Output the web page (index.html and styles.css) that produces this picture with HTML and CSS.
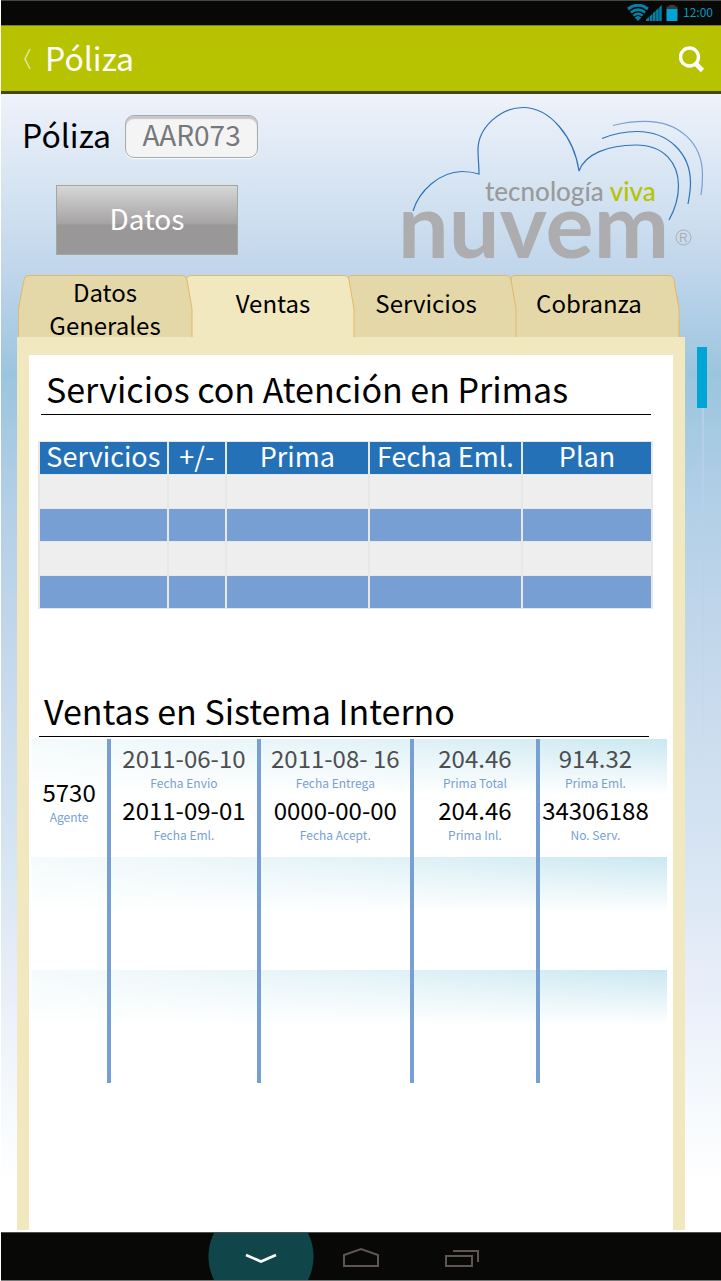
FILE: index.html
```html
<!DOCTYPE html>
<html lang="es">
<head>
<meta charset="utf-8">
<meta name="viewport" content="width=device-width, initial-scale=1">
<title>Póliza</title>
<link rel="stylesheet" href="styles.css">
</head>
<body>
<div class="status-bar">
  <svg class="status-icons" width="52" height="18" viewBox="0 0 52 18" aria-hidden="true">
    <g fill="none" stroke="#0481a8">
      <path d="M1 5Q11-2.500 21 5" stroke-width="3"/>
      <path d="M3.800 8.600Q11 2.800 18.200 8.600" stroke-width="2.600"/>
      <path d="M6.300 11.700Q11 7.700 15.700 11.700" stroke-width="2.400"/>
    </g>
    <path d="M7.700 13.500Q11 10.500 14.300 13.500L11 17Z" fill="#0481a8"/>
    <path d="M19 17V15.500L22 13V17ZM22.600 17V12.500L25.500 9.800V17ZM26 17V9L28.600 6.800V17ZM29.100 17V6.300L31.700 4V17ZM32.200 17V3.500L34.700 1V17Z" fill="#0481a8"/>
    <path d="M42 1H48V2.500H50.500V5H39.500V2.500H42Z" fill="#3c3c3c"/>
    <path d="M39.500 5H50.500V17H39.500Z" fill="#00a4d5"/>
  </svg>
  <span class="clock">12:00</span>
</div>
<header class="app-bar">
  <button class="back" type="button" aria-label="Atrás">
    <svg width="10" height="22" viewBox="0 0 10 22" aria-hidden="true"><path d="M8 1L3 11L8 21" fill="none" stroke="#dfe59b" stroke-width="1.600"/></svg>
  </button>
  <h1 class="app-title">Póliza</h1>
  <button class="search" type="button" aria-label="Buscar">
    <svg width="28" height="28" viewBox="0 0 28 28" aria-hidden="true"><circle cx="10.500" cy="12" r="9" fill="none" stroke="#fff" stroke-width="3.400"/><path d="M16 18L23.500 25.500" stroke="#fff" stroke-width="4.600"/></svg>
  </button>
</header>
<main class="page">
  <section class="hero">
    <div class="policy">
      <div class="policy-row">
        <label class="policy-label" for="policy">Póliza</label>
        <input class="policy-input" id="policy" type="text" value="AAR073">
      </div>
      <button class="data-button" type="button">Datos</button>
    </div>
    <svg class="logo" width="314" height="164" viewBox="396 100 314 164" role="img" aria-label="nuvem, tecnología viva">
      <g fill="none" stroke="#2d73b9" stroke-width="1.200">
        <path d="M413 211C419 191 439 172 462 171.500C468 171.500 474 172.500 479 174C479 166 478 158 478 150C478 127 501 107.500 523 107.500C550 107.500 574 137 579 171C585 154 608 145 636 145C664 145 678.500 163 678.500 186C678.500 201 674 211 669 220"/>
        <path d="M602 138.500C613 134 624 131.500 637 131.500C668 131.500 690.500 153 690.500 183C690.500 191 689 198 688 204"/>
        <path d="M613 125.500C622 123 633 121.300 645 121.300C679 121.300 702.500 143 702.500 175C702.500 183 702 189 701 195" stroke="#7c9fd3"/>
      </g>
      <text class="logo-tag" x="485" y="201">tecnología <tspan class="logo-accent">viva</tspan></text>
      <text class="logo-name" x="398" y="258">nuvem</text>
      <circle cx="683.500" cy="237.500" r="7.500" fill="none" stroke="#adadb0"/>
      <text class="logo-mark" x="679" y="242">R</text>
    </svg>
  </section>
  <div class="body-row">
    <div class="folder">
      <nav class="tabs" aria-label="Secciones">
        <svg class="tab-shapes" viewBox="0 0 662 62" preserveAspectRatio="none" aria-hidden="true">
          <g stroke="#e6b766" fill="#e4d8a8">
            <path d="M493 66V5Q493 .500 497 .500H651Q655 .500 656 5L661 34V66"/>
            <path d="M330 66V5Q330 .500 334 .500H488Q492 .500 493 5L498 34V66"/>
            <path d="M168 66V5Q169 .500 173 .500H326Q330 .500 331 5L336 34V66" fill="#f1e8c0"/>
            <path d="M.500 66V34L6 5Q7 .500 11 .500H165Q168 .500 169 5L174 34V66"/>
          </g>
        </svg>
        <button class="tab tab-wrapped" type="button">Datos<br>Generales</button>
        <button class="tab" type="button">Ventas</button>
        <button class="tab tab-inset" type="button">Servicios</button>
        <button class="tab tab-inset" type="button">Cobranza</button>
      </nav>
      <div class="sheet">
        <h2 class="heading">Servicios con Atención en Primas</h2>
        <table class="services">
          <colgroup><col class="w-service"><col class="w-sign"><col class="w-prima"><col class="w-date"><col class="w-plan"></colgroup>
          <thead><tr><th>Servicios</th><th>+/-</th><th>Prima</th><th>Fecha Eml.</th><th>Plan</th></tr></thead>
          <tbody>
            <tr><td></td><td></td><td></td><td></td><td></td></tr>
            <tr><td></td><td></td><td></td><td></td><td></td></tr>
            <tr><td></td><td></td><td></td><td></td><td></td></tr>
            <tr><td></td><td></td><td></td><td></td><td></td></tr>
          </tbody>
        </table>
        <h2 class="heading heading-sales">Ventas en Sistema Interno</h2>
        <table class="sales">
          <colgroup><col class="s-agent"><col class="s-sent"><col class="s-delivery"><col class="s-total"><col class="s-last"></colgroup>
          <tbody>
            <tr>
              <td class="agent"><span class="value">5730</span><span class="caption">Agente</span></td>
              <td><span class="value muted">2011-06-10</span><span class="caption">Fecha Envio</span><span class="value">2011-09-01</span><span class="caption">Fecha Eml.</span></td>
              <td><span class="value muted">2011-08- 16</span><span class="caption">Fecha Entrega</span><span class="value">0000-00-00</span><span class="caption">Fecha Acept.</span></td>
              <td><span class="value muted">204.46</span><span class="caption">Prima Total</span><span class="value">204.46</span><span class="caption">Prima Inl.</span></td>
              <td class="last"><span class="value muted">914.32</span><span class="caption">Prima Eml.</span><span class="value">34306188</span><span class="caption">No. Serv.</span></td>
            </tr>
            <tr><td></td><td></td><td></td><td></td><td></td></tr>
            <tr><td></td><td></td><td></td><td></td><td></td></tr>
          </tbody>
        </table>
      </div>
    </div>
    <div class="rail"><div class="track"><div class="thumb"></div></div></div>
  </div>
</main>
<nav class="system-nav" aria-label="Sistema">
  <button class="nav-button nav-back" type="button" aria-label="Ocultar">
    <svg width="32" height="12" viewBox="0 0 32 12" aria-hidden="true"><path d="M1 2L16 8.500L31 2" fill="none" stroke="#fff" stroke-width="2.600"/></svg>
  </button>
  <button class="nav-button nav-home" type="button" aria-label="Inicio">
    <svg width="38" height="22" viewBox="0 0 38 22" aria-hidden="true"><path d="M2 19V8L19 2L36 8V19Z" fill="none" stroke="#5f5553" stroke-width="2"/></svg>
  </button>
  <button class="nav-button nav-recent" type="button" aria-label="Recientes">
    <svg width="38" height="22" viewBox="0 0 38 22" aria-hidden="true"><path d="M3 9H29V19H3ZM10 4H35V15" fill="none" stroke="#5f5553" stroke-width="2"/></svg>
  </button>
</nav>
</body>
</html>
```
FILE: styles.css
```css
* { box-sizing: border-box; }

body {
  margin: 0;
  padding-left: 1px;
  min-height: 100vh;
  display: flex;
  flex-direction: column;
  background: #fff;
  color: #000;
  font-family: "Noto Sans CJK SC", "Open Sans", sans-serif;
}

button, input { font: inherit; }
button { border: 0; padding: 0; background: none; color: inherit; }

.status-bar {
  height: 25px;
  padding: 0 8px;
  border-top: 1px solid #464644;
  background: #080806;
  display: flex;
  justify-content: flex-end;
  align-items: center;
  gap: 4px;
}
.status-icons { flex: none; }
.clock { color: #0598c4; font-size: 12px; line-height: 22px; padding-bottom: 2px; }

.app-bar {
  height: 69px;
  padding: 0 14px 0 21px;
  border-top: 1px solid #7c8120;
  border-bottom: 3px solid #454516;
  background: #b7c300;
  color: #fff;
  display: flex;
  align-items: center;
}
.back, .search { display: flex; }
.app-title { margin: 0 0 0 13px; padding-bottom: 3px; flex: 1; font-size: 32px; line-height: 60px; font-weight: 400; }

.page {
  flex: 1;
  display: flex;
  flex-direction: column;
  background: linear-gradient(#eef2fb 0, #d9e6f3 80px, #c0d6eb 175px, #9bc5de 281px, #b0cfe6 400px, #c1d6eb 530px, #d9e6f3 780px, #e9effa 900px, #f5f9fc 1005px, #fff 1090px);
}

.hero {
  height: 181px;
  padding: 0 11px 0 21px;
  display: flex;
  justify-content: space-between;
}
.policy { padding-top: 20px; }
.policy-row { display: flex; align-items: center; gap: 14px; }
.policy-label { font-size: 32px; line-height: 40px; padding-bottom: 5px; }
.policy-input {
  width: 133px;
  height: 43px;
  padding: 0 0 5px;
  border: 1px solid #a7a9ac;
  border-radius: 9px;
  background: #f4f4f5;
  box-shadow: inset 0 3px 1px #c8c6ca, 0 1px 1px #fff;
  color: #77787b;
  font-size: 28px;
  text-align: center;
}
.data-button {
  width: 182px;
  height: 70px;
  margin: 26px 0 0 34px;
  padding-bottom: 5px;
  border: 1px solid #a5a69c;
  background: linear-gradient(#d6d7d6, #a5a2a3 56%, #9a9798 57%, #9a9798);
  color: #fff;
  font-size: 28px;
}
.logo { margin-top: 6px; flex: none; overflow: visible; }
.logo-tag { font: 500 26px Lato, sans-serif; fill: #9b9a9b; }
.logo-accent { fill: #b7c300; }
.logo-name { font: 700 90px Lato, sans-serif; fill: #adadb0; }
.logo-mark { font: 12px "Liberation Sans", sans-serif; fill: #adadb0; }

.body-row { flex: 1; padding-left: 16px; display: flex; }
.folder { flex: 1; display: flex; flex-direction: column; margin-bottom: 2px; }
.tabs {
  position: relative;
  height: 62px;
  margin: 0 5px 0 1px;
  display: grid;
  grid-template-columns: 174fr 162fr 162fr 164fr;
}
.tab-shapes { position: absolute; inset: 0; width: 100%; height: 100%; }
.tab { position: relative; padding-bottom: 14px; font-size: 24px; line-height: 33px; text-align: center; }
.tab-wrapped { padding-bottom: 3px; }
.tab-inset { padding-right: 18px; }

.sheet {
  flex: 1;
  border: solid #f1e8c0;
  border-width: 18px 12px 0;
  background: #fff;
}
.heading {
  margin: 9px 22px 0 12px;
  padding: 0 0 1px 5px;
  border-bottom: 1px solid #000;
  font-size: 34px;
  line-height: 49px;
  font-weight: 400;
}
.heading-sales { margin: 77px 24px 0 10px; }

.services {
  width: calc(100% - 29px);
  margin: 26px 0 0 9px;
  table-layout: fixed;
  border-collapse: collapse;
}
.services th, .services td { height: 33px; padding: 0; border: 2px solid #e6e7e8; border-width: 1px 2px; }
.services th { padding-bottom: 4px; background: #2471b7; color: #fff; font-size: 27px; line-height: 28px; font-weight: 400; white-space: nowrap; }
.services td { height: 34px; background: #eee; }
.services tr:nth-child(even) td { height: 33px; background: #789fd3; }
.w-service { width: 21%; }
.w-sign { width: 9.5%; }
.w-prima { width: 23.3%; }
.w-date { width: 25%; }
.w-plan { width: 21.2%; }

.sales {
  width: calc(100% - 8px);
  margin: 2px 6px 0 2px;
  table-layout: fixed;
  border-collapse: collapse;
}
.sales tr {
  height: 113px;
  background: linear-gradient(#fff0 0, #fff 56px), linear-gradient(to right, #f5fbfc, #e3f3f7 50%, #c9e8f1);
}
.sales tr:first-child { height: 118px; }
.sales td { padding: 4px 0 0; vertical-align: top; text-align: center; }
.sales td + td { border-left: 4px solid #789fd3; }
.sales .agent { padding-top: 38px; }
.sales .last { padding-right: 16px; }
.value { display: block; font-size: 24px; line-height: 30px; white-space: nowrap; }
.muted { color: #4d4e50; }
.caption { display: block; margin-bottom: 2px; color: #789fd3; font-size: 12px; line-height: 20px; }
.s-agent { width: 12.3%; }
.s-sent { width: 23.5%; }
.s-delivery { width: 24.1%; }
.s-total { width: 19.8%; }
.s-last { width: 20.3%; }

.rail { width: 36px; padding: 72px 0 0 12px; }
.track {
  height: 420px;
  background: linear-gradient(#b9d0e8, #b9d0e800) 5px 0 / 2px 100% no-repeat;
}
.thumb { width: 10px; height: 61px; background: #00a4d5; }

.system-nav {
  height: 49px;
  padding-left: 207px;
  border-top: 1px solid #4c5453;
  border-bottom: 1px solid #777;
  background: #080806;
  display: flex;
}
.nav-button { height: 47px; display: flex; justify-content: center; align-items: center; }
.nav-back { width: 106px; background: radial-gradient(circle, #104549 52px, #080806 53px); padding-top: 4px; }
.nav-home { width: 94px; padding-top: 3px; }
.nav-recent { width: 108px; padding-top: 3px; }
```
